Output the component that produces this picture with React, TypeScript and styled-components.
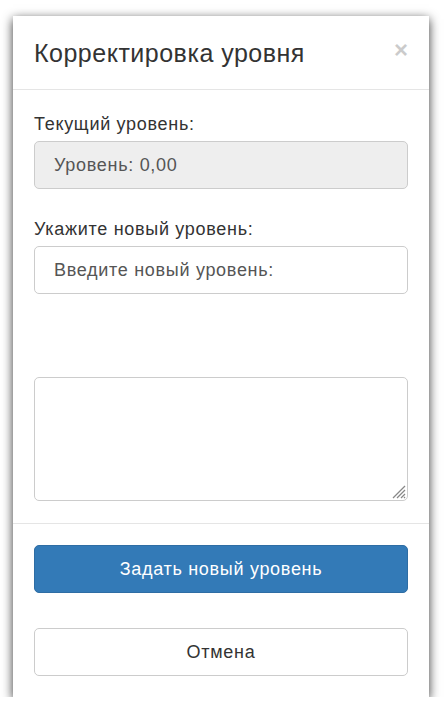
import React from "react";
import styled, { createGlobalStyle } from "styled-components";

const Global = createGlobalStyle`
  html, body { margin: 0; padding: 0; background: #ffffff; }
  body { font-family: "Liberation Sans", Arial, sans-serif; color: #333333; }
  * { box-sizing: border-box; }
`;

const Page = styled.div`
  padding: 16px 0 0 13px;
`;

const Dialog = styled.div`
  width: 416px;
  height: 681px;
  background: #ffffff;
  box-shadow: 0 3px 10px rgba(0, 0, 0, 0.8);
  display: flex;
  flex-direction: column;
`;

const Header = styled.div`
  height: 77px;
  padding: 0 21px 0 21px;
  display: flex;
  align-items: center;
  justify-content: space-between;
  border-bottom: 1px solid #e5e5e5;
`;

const Title = styled.h4`
  margin: 0;
  font-size: 25px;
  font-weight: 400;
  letter-spacing: 0.5px;
  color: #333333;
  line-height: 30px;
`;

const Close = styled.span`
  font-size: 24px;
  font-weight: 700;
  color: #000;
  opacity: 0.2;
  line-height: 1;
  margin-top: -6px;
`;

const Body = styled.div`
  padding: 22px 21px 22px;
  display: flex;
  flex-direction: column;
  border-bottom: 1px solid #e5e5e5;
`;

const Group = styled.div<{ $mb: number }>`
  display: flex;
  flex-direction: column;
  margin-bottom: ${(p) => p.$mb}px;
`;

const Label = styled.label`
  font-size: 18px;
  letter-spacing: 0.7px;
  line-height: 25px;
  margin-bottom: 4px;
  color: #333333;
`;

const Field = styled.div<{ $readonly?: boolean }>`
  height: 48px;
  border: 1px solid #cccccc;
  border-radius: 5px;
  background: ${(p) => (p.$readonly ? "#eeeeee" : "#ffffff")};
  padding: 0 19px;
  display: flex;
  align-items: center;
  font-size: 18px;
  letter-spacing: 0.7px;
  color: #555555;
`;

const TextArea = styled.div`
  position: relative;
  height: 124px;
  border: 1px solid #cccccc;
  border-radius: 5px;
  background: #ffffff;
`;

const Grip = styled.svg`
  position: absolute;
  right: 1px;
  bottom: 1px;
`;

const Footer = styled.div`
  padding: 21px 21px 21px;
  display: flex;
  flex-direction: column;
  gap: 35px;
`;

const Button = styled.button<{ $primary?: boolean }>`
  height: 48px;
  width: 100%;
  border-radius: 5px;
  border: 1px solid ${(p) => (p.$primary ? "#2e6da4" : "#cccccc")};
  background: ${(p) => (p.$primary ? "#337ab7" : "#ffffff")};
  color: ${(p) => (p.$primary ? "#ffffff" : "#333333")};
  font-family: "Liberation Sans", Arial, sans-serif;
  font-size: 18px;
  letter-spacing: 0.7px;
  padding: 0;
`;

export default function App() {
  return (
    <>
      <Global />
      <Page>
        <Dialog>
          <Header>
            <Title>Корректировка уровня</Title>
            <Close>×</Close>
          </Header>
          <Body>
            <Group $mb={28}>
              <Label>Текущий уровень:</Label>
              <Field $readonly>Уровень: 0,00</Field>
            </Group>
            <Group $mb={83}>
              <Label>Укажите новый уровень:</Label>
              <Field>Введите новый уровень:</Field>
            </Group>
            <TextArea>
              <Grip width="14" height="14" viewBox="0 0 14 14">
                <g stroke="#888" strokeWidth="1.2">
                  <line x1="13" y1="1" x2="1" y2="13" />
                  <line x1="13" y1="5" x2="5" y2="13" />
                  <line x1="13" y1="9" x2="9" y2="13" />
                  <line x1="13" y1="12" x2="12" y2="13" />
                </g>
              </Grip>
            </TextArea>
          </Body>
          <Footer>
            <Button $primary>Задать новый уровень</Button>
            <Button>Отмена</Button>
          </Footer>
        </Dialog>
      </Page>
    </>
  );
}
